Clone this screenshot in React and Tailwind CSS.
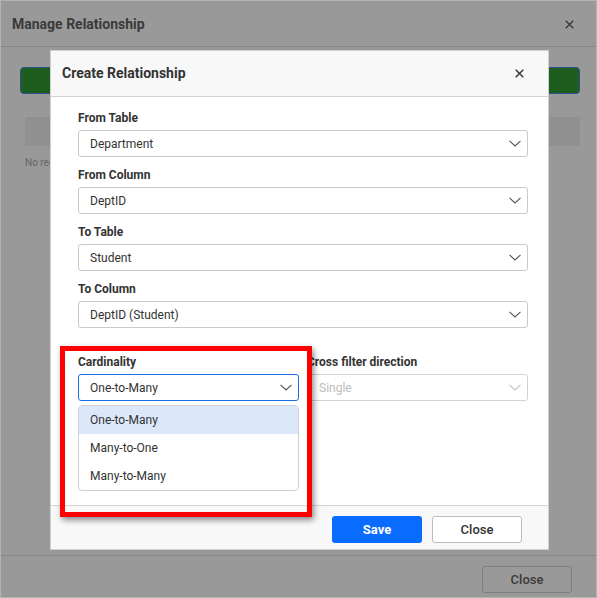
import { useState } from "react";

const Chevron = ({ light }) => (
  <svg width="12" height="7" viewBox="0 0 12 7" className="shrink-0">
    <path d="M0.5 0.8 L6 6 L11.5 0.8" fill="none" stroke={light ? "#c4c4c4" : "#555"} strokeWidth="1.1" />
  </svg>
);

const Cross = ({ color = "#333" }) => (
  <svg width="9" height="9" viewBox="0 0 9 9">
    <path d="M0.7 0.7 L8.3 8.3 M8.3 0.7 L0.7 8.3" stroke={color} strokeWidth="1.4" />
  </svg>
);

const Field = ({ label, value }) => (
  <div className="mb-[10px]">
    <div className="text-[12px] leading-[16px] font-bold text-[#333] mb-[4px]">{label}</div>
    <div className="h-[27px] border border-[#c9c9c9] rounded-[3px] flex items-center justify-between pl-[11px] pr-[6px] text-[12px] text-[#333]">
      <span>{value}</span>
      <Chevron />
    </div>
  </div>
);

const App = () => {
  const [cardinality] = useState("One-to-Many");
  const options = ["One-to-Many", "Many-to-One", "Many-to-Many"];

  return (
    <div className="relative w-[597px] h-[598px] overflow-hidden bg-[#999999] border border-[#b3b3b3] flex flex-col font-['Roboto',sans-serif]">
      {/* outer dialog (behind overlay) */}
      <div className="h-[46px] shrink-0 flex items-center justify-between pl-[11px] pr-[22px] pt-[2px] border-b border-[#878787]">
        <span className="text-[14px] font-bold text-[#3a3a3a]">Manage Relationship</span>
        <Cross color="#3a3a3a" />
      </div>
      <div className="flex-1 pl-[19px] pr-[16px] pt-[20px]">
        <div className="h-[27px] rounded-[4px] bg-[#1d5e1f] border border-[#2c4f8f]" />
        <div className="ml-[5px] mt-[23px] h-[29px] bg-[#909090]" />
        <div className="ml-[5px] mt-[9px] text-[10px] text-[#666]">No records to display</div>
      </div>
      <div className="h-[42px] shrink-0 border-t border-[#878787] flex items-start justify-end pt-[10px] pr-[24px]">
        <div className="w-[90px] h-[27px] rounded-[3px] border border-[#7f7f7f] flex items-center justify-center text-[13px] font-medium text-[#3a3a3a]">
          Close
        </div>
      </div>

      {/* create relationship dialog */}
      <div className="absolute left-[49px] top-[49px] w-[499px] h-[500px] bg-white border border-[#d0d0d0] flex flex-col">
        <div className="h-[46px] shrink-0 bg-[#f8f8f8] border-b border-[#d4d4d4] flex items-center justify-between pl-[11px] pr-[24px]">
          <span className="text-[14px] font-bold text-[#333]">Create Relationship</span>
          <Cross />
        </div>
        <div className="flex-1 pl-[27px] pr-[20px] pt-[13px]">
          <Field label="From Table" value="Department" />
          <Field label="From Column" value="DeptID" />
          <Field label="To Table" value="Student" />
          <Field label="To Column" value="DeptID (Student)" />
          <div className="mt-[26px] flex gap-[8px]">
            <div className="flex-1">
              <div className="text-[12px] leading-[16px] font-bold text-[#333] mb-[4px]">Cardinality</div>
              <div className="h-[27px] border border-[#1a6fe0] rounded-[3px] flex items-center justify-between pl-[11px] pr-[6px] text-[12px] text-[#333]">
                <span>{cardinality}</span>
                <Chevron />
              </div>
            </div>
            <div className="flex-1">
              <div className="text-[12px] leading-[16px] font-bold text-[#333] mb-[4px]">Cross filter direction</div>
              <div className="h-[27px] border border-[#d2d2d2] rounded-[3px] flex items-center justify-between pl-[11px] pr-[6px] text-[12px] text-[#bdbdbd]">
                <span>Single</span>
                <Chevron light />
              </div>
            </div>
          </div>
        </div>
        <div className="h-[44px] shrink-0 bg-[#f8f8f8] border-t border-[#d4d4d4] flex items-start justify-end gap-[10px] pt-[10px] pr-[26px]">
          <div className="w-[90px] h-[27px] rounded-[3px] bg-[#0a6cff] flex items-center justify-center text-[13px] font-bold text-white">
            Save
          </div>
          <div className="w-[90px] h-[27px] rounded-[3px] bg-white border border-[#bdbdbd] flex items-center justify-center text-[13px] font-medium text-[#333]">
            Close
          </div>
        </div>
      </div>

      {/* open dropdown popup */}
      <div className="absolute left-[77px] top-[404px] w-[221px] h-[86px] bg-white border border-[#cfcfcf] rounded-[4px] overflow-hidden text-[12px] text-[#333]">
        {options.map((o, i) => (
          <div
            key={o}
            className={`h-[28px] flex items-center pl-[11px] ${i === 0 ? "bg-[#dce8fa]" : ""}`}
          >
            {o}
          </div>
        ))}
      </div>

      {/* red annotation frame */}
      <div className="absolute left-[59px] top-[345px] w-[252px] h-[171px] border-[5px] border-[#ff0000] shadow-[2px_3px_6px_rgba(0,0,0,0.45)]" />
    </div>
  );
};

export default App;
